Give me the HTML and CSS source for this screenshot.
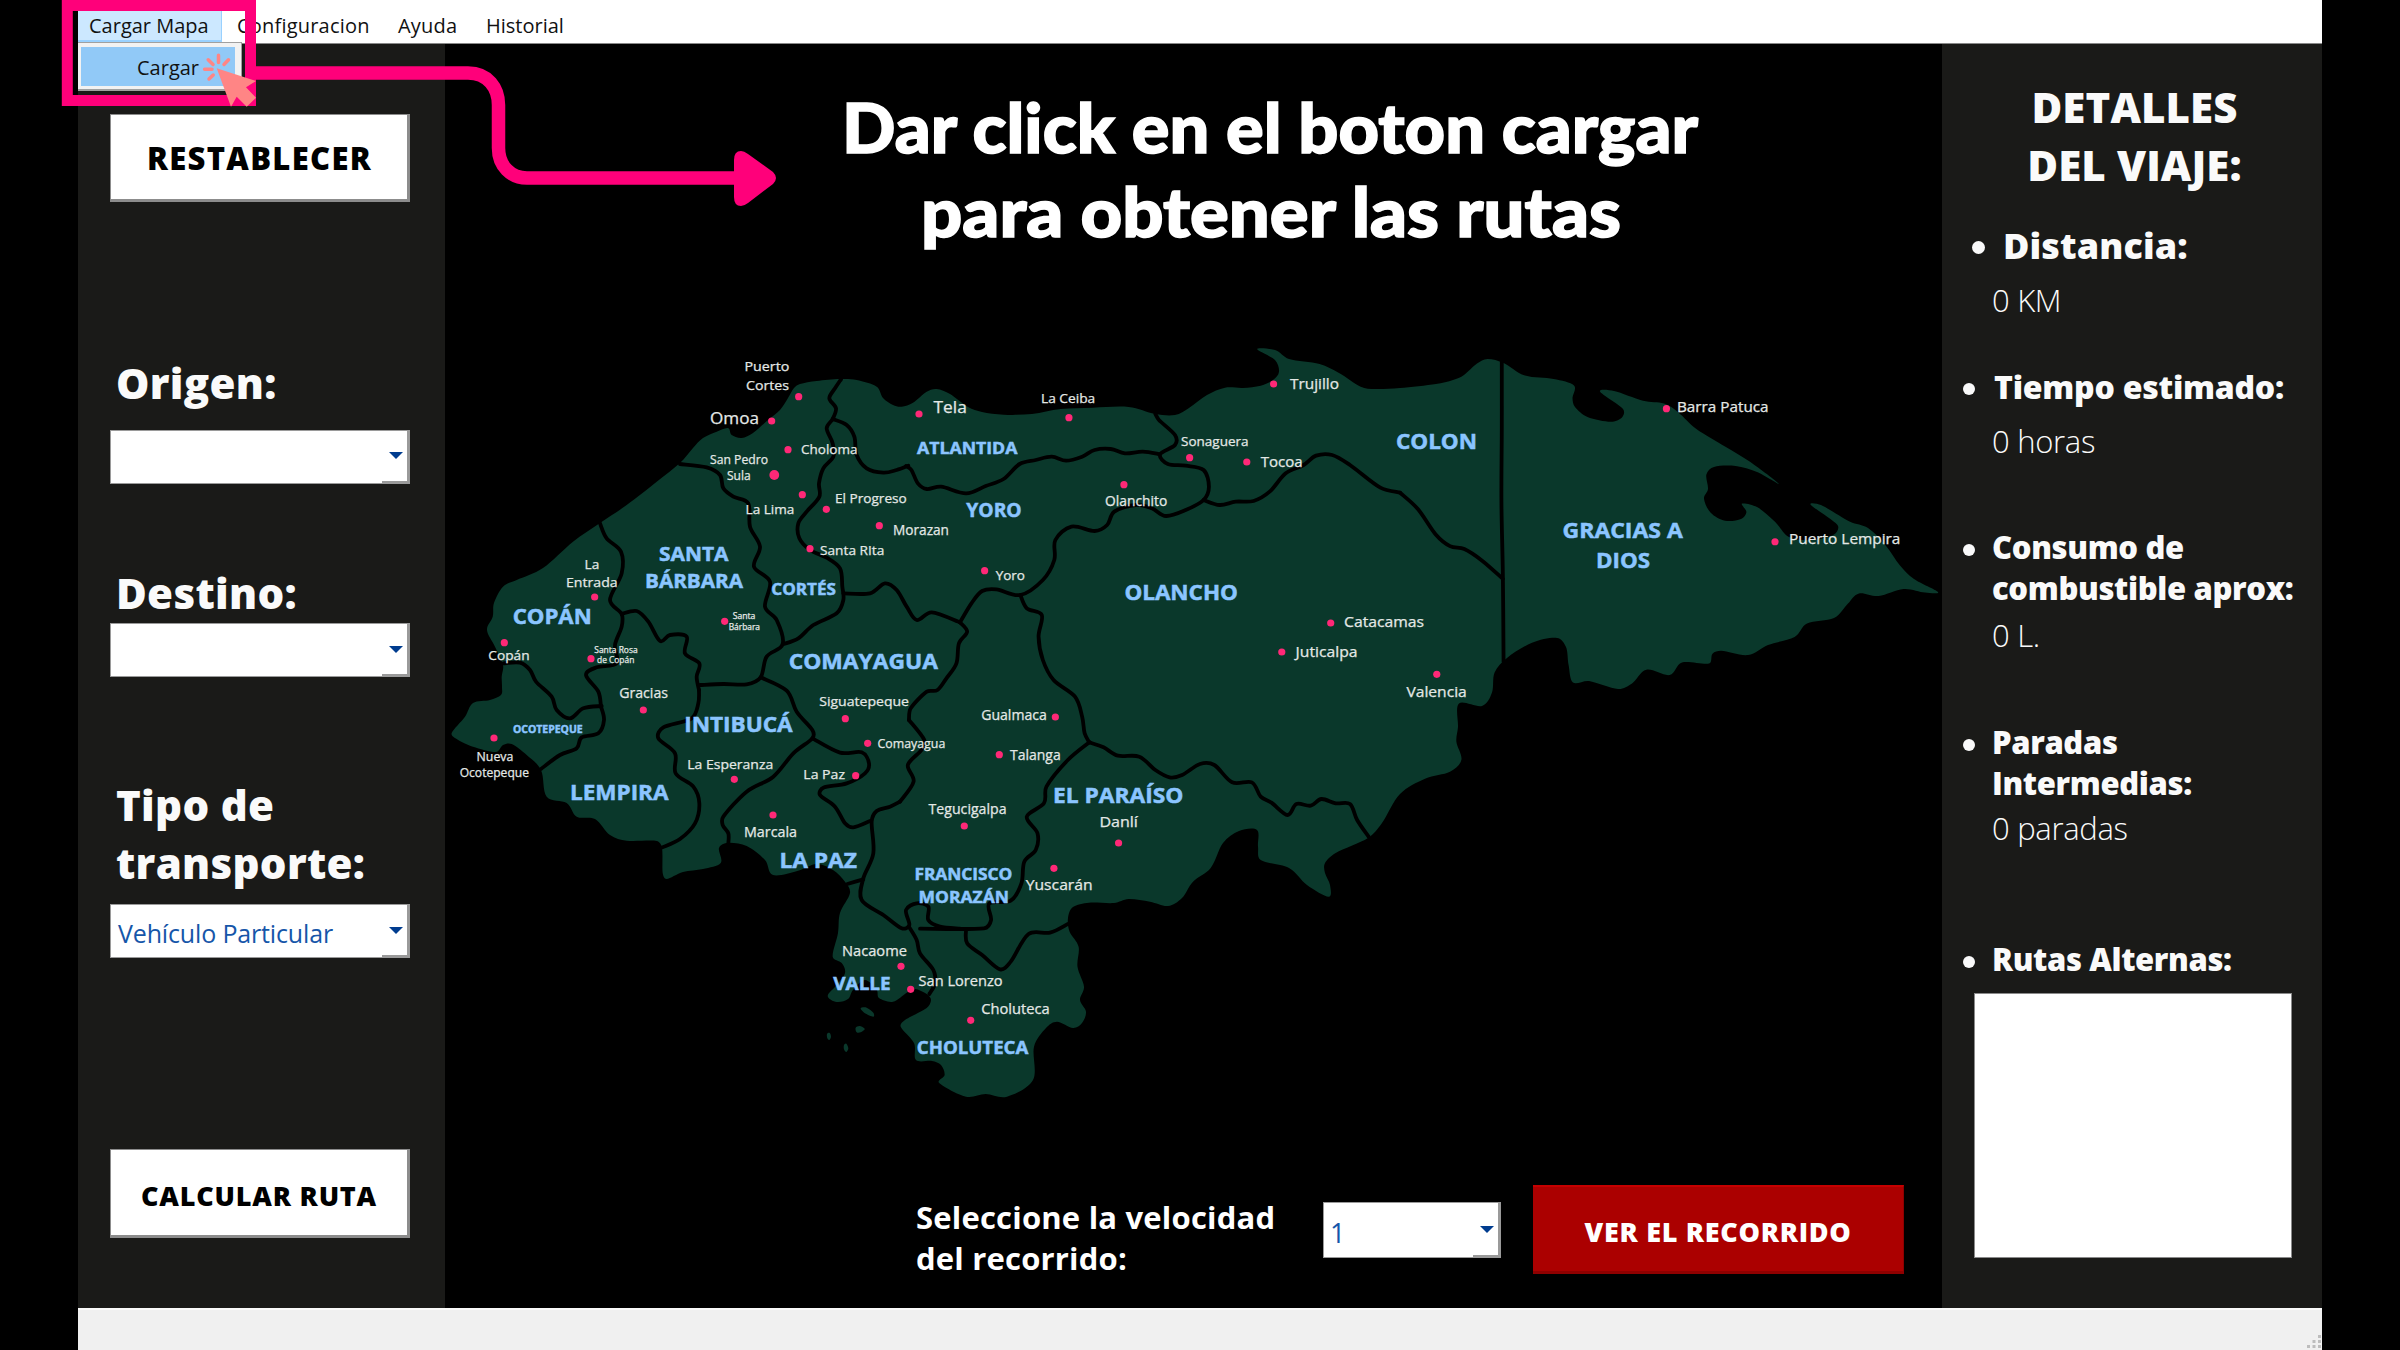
FILE: index.html
```html
<!DOCTYPE html>
<html lang="es">
<head>
<meta charset="utf-8">
<title>Rutas de Honduras</title>
<link rel="stylesheet" href="styles.css">
</head>
<body>
<div class="window">
  <nav class="menubar">
    <div class="menu menu-open"><span class="t-mapa">Cargar Mapa</span>
      <div class="dropdown"><div class="dropdown-item">Cargar</div></div>
    </div>
    <div class="menu menu-config"><span>Configuracion</span></div>
    <div class="menu menu-help"><span>Ayuda</span></div>
    <div class="menu"><span>Historial</span></div>
  </nav>

  <div class="workspace">
    <aside class="panel panel-left">
      <button class="btn btn-reset"><span>RESTABLECER</span></button>
      <h2 class="field-title origin">Origen:</h2>
      <div class="combo combo-origin"><span></span><i class="caret"></i></div>
      <h2 class="field-title destination">Destino:</h2>
      <div class="combo combo-destination"><span></span><i class="caret"></i></div>
      <h2 class="field-title transport">Tipo de<br>transporte:</h2>
      <div class="combo combo-transport"><span>Vehículo Particular</span><i class="caret"></i></div>
      <button class="btn btn-route"><span>CALCULAR RUTA</span></button>
    </aside>

    <main class="stage">
      <svg class="map" viewBox="444 43 1498 1142">
        <g id="land" class="land"></g>
        <g id="borders" class="borders"></g>
        <g class="regions">
          <text x="512.700" y="624.3" textLength="79" font-size="21">COPÁN</text>
          <text x="659" y="560.7" textLength="69.5" font-size="20">SANTA</text>
          <text x="645" y="588.3" textLength="98" font-size="20">BÁRBARA</text>
          <text x="771.3" y="595" textLength="64.7" font-size="16.5">CORTÉS</text>
          <text x="788.7" y="669" textLength="149.3" font-size="21">COMAYAGUA</text>
          <text x="684.2" y="731.7" textLength="108.5" font-size="21">INTIBUCÁ</text>
          <text x="513" y="733" textLength="69.7" font-size="11">OCOTEPEQUE</text>
          <text x="570" y="799.7" textLength="98.5" font-size="21">LEMPIRA</text>
          <text x="779.4" y="868" textLength="77.5" font-size="21">LA PAZ</text>
          <text x="833.3" y="989.7" textLength="57.3" font-size="17.5">VALLE</text>
          <text x="917" y="454.3" textLength="100.4" font-size="16.5">ATLANTIDA</text>
          <text x="966.3" y="517.3" textLength="55.4" font-size="19">YORO</text>
          <text x="1124.4" y="599.7" textLength="113.5" font-size="20.5">OLANCHO</text>
          <text x="1053" y="803" textLength="130.3" font-size="21">EL PARAÍSO</text>
          <text x="914.4" y="879.7" textLength="98" font-size="16.5">FRANCISCO</text>
          <text x="918.6" y="903" textLength="90.3" font-size="16.5">MORAZÁN</text>
          <text x="916.8" y="1053.7" textLength="111.5" font-size="18.5">CHOLUTECA</text>
          <text x="1396" y="449" textLength="81" font-size="20.5">COLON</text>
          <text x="1562.6" y="537.7" textLength="120.2" font-size="20.5">GRACIAS A</text>
          <text x="1596" y="568" textLength="54" font-size="20.5">DIOS</text>
        </g>
        <g class="cities">
          <text x="744.5" y="371" textLength="44.8" font-size="13.5">Puerto</text>
          <text x="746" y="389.7" textLength="43" font-size="13.5">Cortes</text>
          <text x="710" y="424" textLength="49" font-size="17">Omoa</text>
          <text x="801" y="454.3" textLength="56.4" font-size="13.5">Choloma</text>
          <text x="710" y="464" textLength="58" font-size="13">San Pedro</text>
          <text x="727" y="480" textLength="23.7" font-size="13">Sula</text>
          <text x="745.6" y="514.3" textLength="48.7" font-size="13.5">La Lima</text>
          <text x="835" y="503" textLength="71.7" font-size="13.5">El Progreso</text>
          <text x="893" y="535" textLength="56" font-size="14">Morazan</text>
          <text x="820" y="554.7" textLength="64.3" font-size="13.5">Santa RIta</text>
          <text x="584.6" y="568.7" textLength="14.7" font-size="13.5">La</text>
          <text x="566" y="587" textLength="51.7" font-size="13.5">Entrada</text>
          <text x="732.7" y="618.7" textLength="22.7" font-size="8.5">Santa</text>
          <text x="728.7" y="629.7" textLength="31.3" font-size="8.5">Bárbara</text>
          <text x="488.3" y="660.3" textLength="41.3" font-size="13.5">Copán</text>
          <text x="594.3" y="652.7" textLength="43.3" font-size="8.5">Santa Rosa</text>
          <text x="597" y="663.3" textLength="37.3" font-size="8.5">de Copán</text>
          <text x="619.2" y="697.7" textLength="48.8" font-size="14">Gracias</text>
          <text x="819.2" y="705.7" textLength="89.8" font-size="13.5">Siguatepeque</text>
          <text x="476.6" y="760.7" textLength="36.7" font-size="12.5">Nueva</text>
          <text x="459.7" y="776.7" textLength="69.3" font-size="12.5">Ocotepeque</text>
          <text x="687.3" y="769.3" textLength="86" font-size="13.5">La Esperanza</text>
          <text x="803.3" y="779.3" textLength="41.7" font-size="13.5">La Paz</text>
          <text x="877.5" y="748" textLength="67.8" font-size="13">Comayagua</text>
          <text x="744" y="836.7" textLength="53" font-size="14">Marcala</text>
          <text x="842" y="955.7" textLength="65" font-size="14">Nacaome</text>
          <text x="918.5" y="986.3" textLength="84.1" font-size="14">San Lorenzo</text>
          <text x="933.6" y="413.3" textLength="33.2" font-size="16.5">Tela</text>
          <text x="1041" y="402.7" textLength="54.2" font-size="13.5">La Ceiba</text>
          <text x="1290" y="389.3" textLength="49" font-size="14">Trujillo</text>
          <text x="1181" y="446.3" textLength="67.5" font-size="13.5">Sonaguera</text>
          <text x="1260.7" y="466.7" textLength="42" font-size="15">Tocoa</text>
          <text x="1105" y="506.3" textLength="62.2" font-size="14">Olanchito</text>
          <text x="995.7" y="579.7" textLength="29.3" font-size="13.5">Yoro</text>
          <text x="1344" y="626.7" textLength="80" font-size="14.5">Catacamas</text>
          <text x="1295.6" y="656.7" textLength="61.9" font-size="14.5">Juticalpa</text>
          <text x="1406.4" y="697" textLength="60.4" font-size="14.5">Valencia</text>
          <text x="981.2" y="719.7" textLength="65.6" font-size="14">Gualmaca</text>
          <text x="1010" y="759.7" textLength="50.7" font-size="14">Talanga</text>
          <text x="928.6" y="814.3" textLength="77.9" font-size="14">Tegucigalpa</text>
          <text x="1099.4" y="827.3" textLength="38.5" font-size="14.5">Danlí</text>
          <text x="1025.7" y="890" textLength="67" font-size="14.5">Yuscarán</text>
          <text x="981.2" y="1013.7" textLength="68.5" font-size="14">Choluteca</text>
          <text x="1677" y="411.6" textLength="91.6" font-size="14">Barra Patuca</text>
          <text x="1789" y="544.3" textLength="111.4" font-size="14">Puerto Lempira</text>
        </g>
        <g id="pins" class="pins"></g>
        <g class="headline">
          <text x="842" y="152.5" textLength="856" font-size="68">Dar click en el boton cargar</text>
          <text x="921" y="236.5" textLength="700" font-size="68">para obtener las rutas</text>
        </g>
      </svg>
      <div class="controls">
        <p class="speed-label">Seleccione la velocidad<br>del recorrido:</p>
        <div class="combo combo-speed"><span>1</span><i class="caret"></i></div>
        <button class="btn-play"><span>VER EL RECORRIDO</span></button>
      </div>
    </main>

    <aside class="panel panel-right">
      <h1 class="details-title">DETALLES<br><span>DEL VIAJE:</span></h1>
      <h3 class="item distance"><span>Distancia:</span></h3>
      <p class="value v-distance">0 KM</p>
      <h3 class="item time"><span>Tiempo estimado:</span></h3>
      <p class="value v-time">0 horas</p>
      <h3 class="item fuel"><span>Consumo de<br>combustible aprox:</span></h3>
      <p class="value v-fuel">0 L.</p>
      <h3 class="item stops"><span>Paradas<br>Intermedias:</span></h3>
      <p class="value v-stops">0 paradas</p>
      <h3 class="item routes"><span>Rutas Alternas:</span></h3>
      <div class="routes-list"></div>
    </aside>
  </div>

  <footer class="statusbar">
    <svg class="grip" viewBox="0 0 15 15"><path d="M11 0h3v3h-3zM5.500 5h3v3h-3zM11 5h3v3h-3zM0 10h3v3h-3zM5.500 10h3v3h-3zM11 10h3v3h-3z"/></svg>
  </footer>
</div>

<svg class="annotation" viewBox="0 0 800 220">
  <rect class="frame" x="67.300" y="5.500" width="183.200" height="95"/>
  <path class="arrow-line" d="M250 73H468C488 73 498.500 88 498.500 105V148C498.500 166 511 178 527 178H740"/>
  <path class="arrow-head" d="M734 160Q734 151 741 151Q744 151 748 154L773 172Q779 178 773 184L748 203Q744 206 741 206Q734 206 734 197Z"/>
  <path class="pointer" d="M216.700 68.300L256 81L246 87.300L256 97.700L246.700 106.700L236.700 96.700L231 106.700Z"/>
  <path class="rays" d="M218.500 55.300V62.500M228.500 59.800L224 64.500M208.200 59.800L213 64.500M204.600 69.300H212M209 79L213.200 75"/>
</svg>
<script src="map.js"></script>
</body>
</html>
```
FILE: styles.css
```css
* { box-sizing: border-box; }
html, body { margin: 0; height: 100%; background: #000; overflow: hidden; }
body { font-family: "Open Sans", "Noto Sans", sans-serif; position: relative; }
h1, h2, h3, p { margin: 0; }
button { border: 0; padding: 0; font-family: inherit; white-space: nowrap; }

.window { width: 2244px; height: 1350px; margin-left: 78px; display: flex; flex-direction: column; }

.menubar { height: 44px; background: #fff; display: flex; border-bottom: 1px solid #888; font-size: 20px; line-height: 27px; color: #111; flex: none; }
.menu { position: relative; padding: 12px 14px 0 15px; white-space: nowrap; }
.menu-open { width: 144px; height: 42px; padding-left: 11px; background: #cce8ff; border: solid #99d1ff; border-width: 0 1px 2px 0; }
.menu-config { width: 161px; letter-spacing: 0.2px; }
.menu-help { width: 88px; letter-spacing: 0.2px; }
.dropdown { position: absolute; left: 0; top: 42px; width: 164px; height: 49px; background: #f2f2f2; border: solid #a0a0a0; border-width: 1px 1px 2px 0; padding: 4px 6px 4px 3px; z-index: 2; }
.dropdown-item { height: 39px; width: 154px; background: #91c9f7; padding: 7px 0 0 56px; }

.workspace { flex: none; height: 1264px; display: flex; }
.panel { background: #1a1a18; color: #fafafa; display: flex; flex-direction: column; }
.panel-left { width: 367px; padding: 70px 35px 0 32px; }
.panel-right { width: 380px; padding: 34px 0 0 50px; }

.btn { background: #fff; color: #000; font-weight: 800; border: solid #8c8c8c; border-width: 1px 3px 3px 1px; flex: none; }
.btn-reset { height: 88px; font-size: 31px; letter-spacing: 1.3px; padding: 2px 0 0 1px; }
.btn-route { height: 89px; margin-top: 191px; font-size: 27px; letter-spacing: 0.8px; padding-top: 5px; }
.field-title { font-size: 42px; line-height: 57.500px; font-weight: 800; padding-left: 6px; letter-spacing: 0.3px; white-space: nowrap; }
.origin { margin-top: 152px; }
.destination { margin-top: 80px; }
.transport { margin-top: 99px; }
.combo { position: relative; height: 54px; background: #fff; border: solid #9a9a9a; border-width: 1px 3px 1px 1px; display: flex; align-items: center; justify-content: space-between; padding: 4px 4px 0 7px; font-size: 25px; letter-spacing: -0.150px; color: #1656a9; flex: none; white-space: nowrap; }
.combo::after { content: ""; position: absolute; right: 0; bottom: 0; width: 25px; height: 2px; background: #9a9a9a; }
.combo-origin { margin-top: 18px; }
.combo-destination { margin-top: 2px; }
.combo-transport { margin-top: 13px; }
.caret { border: 7px solid transparent; border-top: 7px solid #003c8f; border-bottom: 0; margin-top: -6px; }

.stage { width: 1497px; background: #000; }
.map { display: block; width: 1498px; height: 1142px; margin: -1px 0 0 -1px; overflow: hidden; }
.land { fill: #0a382b; }
.borders { fill: none; stroke: #000; stroke-width: 3.800px; stroke-linejoin: round; stroke-linecap: round; }
.regions { fill: #8bc5ff; font-weight: 700; stroke: #8bc5ff; stroke-width: 0.500px; }
.cities { fill: #e4e8e6; font-weight: 500; stroke: #e4e8e6; stroke-width: 0.250px; }
.pins { fill: #ff2877; }
.headline { fill: #fff; font-family: "Lato", "Open Sans", sans-serif; font-weight: 900; stroke: #fff; stroke-width: 1.500px; }

.controls { display: flex; padding-left: 471px; color: #fff; }
.speed-label { width: 407px; font-size: 31px; line-height: 41.300px; font-weight: 700; letter-spacing: 0.200px; margin-top: 12px; white-space: nowrap; }
.combo-speed { width: 178px; height: 56px; margin-top: 17px; font-size: 27px; padding-left: 6px; }
.btn-play { width: 371px; height: 89px; margin-left: 32px; background: #ab0000; color: #fff; font-weight: 800; font-size: 27px; letter-spacing: 0.700px; border: solid #8e0000; border-width: 2px 1px 3px 0; border-top-color: #c40000; padding-top: 4px; }

.details-title { font-size: 42px; line-height: 58px; font-weight: 800; text-align: center; width: 285px; letter-spacing: 0.100px; }
.item { position: relative; font-size: 31px; line-height: 41.500px; font-weight: 800; letter-spacing: -0.350px; display: flex; white-space: nowrap; margin-left: -29px; padding-left: 29px; }
.item::before { content: ""; position: absolute; left: 0; top: 17px; width: 12px; height: 12px; border-radius: 50%; background: #fafafa; }
.value { font-size: 31px; line-height: 42px; font-weight: 300; letter-spacing: -0.300px; }
.distance { font-size: 36px; line-height: 48px; letter-spacing: 0.100px; margin-top: 28px; margin-left: -20px; padding-left: 31px; }
.distance::before { top: 19px; width: 13px; height: 13px; }
.v-distance { margin-top: 9px; }
.time { font-size: 32px; letter-spacing: -0.250px; margin-top: 45px; padding-left: 31px; }
.v-time { margin-top: 12px; }
.fuel { margin-top: 65px; }
.v-fuel { margin-top: 4px; }
.stops { margin-top: 66px; }
.v-stops { margin-top: 2px; }
.routes { margin-top: 90px; }
.routes-list { width: 318px; height: 265px; margin: 13px 0 0 -18px; background: #fff; border: 1px solid #8a8a8a; }

.statusbar { flex: 1; background: #f0f0f0; border-top: 2px solid #fafafa; display: flex; justify-content: flex-end; align-items: flex-end; }
.grip { width: 15px; height: 15px; fill: #bdbdbd; }

.annotation { position: absolute; left: 0; top: 0; width: 800px; height: 220px; z-index: 5; }
.frame { fill: none; stroke: #ff007a; stroke-width: 11px; }
.arrow-line { fill: none; stroke: #ff007a; stroke-width: 13.500px; }
.arrow-head { fill: #ff007a; }
.pointer { fill: #ff8585; }
.rays { fill: none; stroke: #ff8585; stroke-width: 3.500px; stroke-linecap: round; }
```
FILE: map.js
```js
// Survey sheets: each one has its own origin and units per pixel.
const SHEETS = {
  A: [440, 320, 3, 3],
  B: [900, 320, 2.8, 3],
  C: [440, 640, 3, 3],
  D: [900, 660, 2.8, 3],
  E: [1400, 320, 2.8, 2.751]
};

const COAST = `451.7,733 465,716.7 473,703 490,700 501,695 502,687 501.7,676.7 503,665 495,646.7 487,630 492.7,616.7 494,603 503,586.7 516.7,580 543,568 573,541.7 600,523 626.7,505 656.7,481.7 680,463 693,448 703,438 716.7,431.7 728,428 731.7,435 741.7,438 753,433 768,420 780,410 788,398 794,388 800,384 816.7,381 840,379 856.7,380 876.7,386.7 883,398 893,405 901.7,406.7 913,402.7 926.7,391.7 936.7,389 950,394 968,407 982,412 1003.6,414.7 1032,414 1060.7,409 1093,407.7 1128.6,407 1155,414 1175,415 1189,408 1207,395 1225,387.7 1243,388 1260.7,385.7 1273,380 1279,371.7 1275,360 1257,349 1275,350 1289,359 1319.6,364 1339,373 1360.7,386.7 1375,389 1400,388 1436,384 1453,380 1464,375 1477,363.6 1487.500,359 1503.6,363 1525,375.6 1553.6,379 1574,385.4 1572.5,398 1575,407 1587.5,417 1610.7,421.8 1622,417.4 1623,409 1600,391.6 1614,391 1643,400.7 1664,403.6 1678.6,412.7 1696.4,429 1725,446.5 1750,461.8 1778.6,483.6 1757,472 1735.7,466 1714,466.9 1706.4,474.5 1708,489 1704,498.8 1710.7,512.7 1725,520.7 1741,519 1746.4,512 1742,503.6 1757,507 1775,521.7 1789,537 1812,540 1834,534.5 1837.5,525 1810.7,504.7 1821,505 1850,521.7 1868,528 1885.7,545.4 1900,565.4 1914,579 1938,592 1925,592.6 1903.6,589 1878.6,596 1859,593.4 1848,603.5 1834,618 1807,623.5 1794.6,637 1768,645 1748,655 1721.4,650.8 1712.5,653.7 1709,663.5 1682,662.4 1669.6,675 1646.4,669.7 1632,683.5 1618,689 1589,681 1573,682.4 1568.6,665 1566,647 1557,638 1532,642.8 1507,658 1494.6,672.6 1492,692.6 1482,706 1459,703.5 1458,727 1456.4,741.7 1461.4,759.8 1450,771.8 1425,778.7 1400,794 1382,823 1368,838 1335.7,853 1325,863 1325,873 1330,885 1328.6,896.7 1307,885 1289,868 1260.7,860 1258,846.7 1257,830 1239,831 1223,843 1210.7,868 1193,881.7 1182,898 1168,906 1150,901.7 1128.6,899 1114,903 1089,902.7 1073,907 1068,918 1069.6,931.7 1078.6,946.7 1077.5,966.7 1084,986.7 1080,1000 1086,1011.7 1082,1023 1073,1028 1057,1021.7 1046,1028 1034,1046.7 1033,1080 1007,1096.7 985.7,1094 966,1096.7 939,1082.7 944.6,1075 941,1065 932,1061 916,1060 914,1043 900.7,1026.7 905,1020 926.7,1008 931,1000 926.7,994 915,989 906.7,992.7 893,1001.7 879,998 876.7,990 865,980 853,990 848,999 836.7,1002 827.7,996 836.7,985 845,973 841.7,963 832.7,956.7 838,933 840,913 850,893 845,881.7 833,870 816.7,864 798,870.7 773,875 765,860 746.7,846 728,842.7 719,848 720.7,863 703,869 683,872 666.7,879 662.7,873 662,848 656.7,841 626.7,840.7 610,835 595,819 576.7,816.7 566.7,803 546.7,796.7 541,770 526.7,755 511.7,744 503,745 496,752 473,746.7 456.7,739`;

const ISLETS = [
  'C 1262,1105 1280,1103 1300,1118 1300,1130 1275,1120',
  'C 1247,1163 1260,1158 1274,1167 1262,1177 1250,1177',
  'C 1161,1182 1169,1179 1173,1190 1168,1200 1162,1195',
  'C 1212,1215 1219,1211 1225,1225 1219,1236 1212,1228'
];

const BORDERS = [
  'A 1203,178 1185,205 1168,235 1188,265 1178,297 1160,325 1178,370 1180,410 1150,445 1137,490 1138,530 1100,575 1075,610 1078,655 1110,690 1160,713 1200,745 1207,800 1210,840 1190,880 1120,915 1075,955 1028,973',
  'A 1178,297 1220,315 1243,350 1250,405 1280,445 1330,458 1370,450 1405,437',
  'B 17,438 32,450 50,490 75,507 115,500 185,520 240,498 290,477 335,432 380,420 425,410 465,422 510,410 545,390 590,387 630,400 680,395 728,403',
  'A 720,432 800,442 840,465 850,505 880,530 925,550 930,620 960,680 942,740 990,785 975,860 1010,900 1028,973 980,1010 962,1072 920,1093 850,1092 780,1095',
  'A 480,610 500,655 543,695 545,760 510,840 545,882 545,920 525,975 530,1030 470,1042 438,1065 475,1115 483,1160',
  'C 483,200 492,240 475,280 425,292 410,325 360,345 303,387',
  'A 545,882 590,873 625,905 660,963 690,945 740,950 735,1000 778,1030 770,1070 777,1110',
  'C 777,150 775,190 755,235 670,262 655,295 705,340 707,400 760,440 778,490 765,550 720,597 667,622',
  'A 190,1030 240,1028 270,1050 288,1085 335,1130 350,1170 390,1195 430,1165 485,1158',
  'C 962,112 1040,152 1070,215 1117,270 1117,295 1060,340 1000,410 920,455 850,530 848,555 865,580 865,610',
  'C 1117,295 1200,338 1265,337 1287,370 1275,400 1220,430 1150,443 1140,465 1185,500 1215,550 1240,562 1290,543',
  'B 168,907 188,935 165,970 158,1030 130,1075 105,1110 75,1115 30,1165 25,1200',
  'D 25,180 68,240 60,270 22,315 38,365 0,425',
  'C 1380,485 1350,500 1310,513 1295,545 1300,640 1270,715 1265,780 1330,825 1385,865 1408,855 1398,810 1430,790 1465,800 1465,840 1500,860 1560,866',
  'D 56,806 235,805 255,780 250,730 310,722 340,670 348,605 380,570 385,520 355,470 403,430 410,380 470,300 530,247',
  'C 1270,718 1222,732',
  'C 1408,862 1430,900 1440,940 1480,990 1485,1030 1468,1062',
  'A 1210,820 1290,820 1335,790 1370,810 1400,860 1430,900 1475,877 1560,907',
  'B 168,907 200,850 230,813 270,808 337,825 400,780 432,720 435,660 480,620 545,633 580,615 600,575 660,555 705,565 745,588 800,570 850,540 865,500 850,450 800,437 750,432 728,403 770,375 770,345 725,300 715,282',
  'B 850,540 895,555 940,545 990,543 1035,515 1080,460 1130,435 1165,407 1210,405 1260,435 1345,503 1400,518',
  'E 0,475 50,520 100,590 140,622 180,630 230,662 288,712',
  'E 285,115 285,300 284,500 288,700 290,940',
  'B 337,825 355,865 397,885 388,950 400,1020 430,1080 490,1130 510,1190 517,1240 530,1267',
  'D 530,247 570,262 610,287 670,290 715,330 755,352 790,345 840,312 880,315 930,367 985,367 1010,410 1040,428 1085,465 1110,432 1150,437 1180,417 1220,430 1260,432 1280,480 1312,530',
  'D 185,807 188,850 230,885 280,928 310,905 360,822 420,818 470,792'
];

const PINS = [
  'A 1076,230 995,303 1044,389 1087,524 1159,568 1318,617 1110,686 464,831 193,968 854,904 453,1016 610,1170 1216,1196 1437,282',
  'C 162,294 883,418 999,525 1247,407 1283,310 1383,979 1412,1048',
  'B 473,293 1046,192 811,413 971,426 627,494 237,752 1206,909 1069,996 1503,1063 435,1191',
  'D 278,284 180,498 612,549 431,625 198,1081',
  'E 746,244 1050,610'
];

const SVG = 'http://www.w3.org/2000/svg';

function add(parent, tag, attrs) {
  const el = document.createElementNS(SVG, tag);
  for (const k in attrs) el.setAttribute(k, attrs[k]);
  document.getElementById(parent).appendChild(el);
}

function parse(line) {
  return line.split(' ').map(p => p.split(',').map(Number));
}

function onSheet(line) {
  const [ox, oy, sx, sy] = SHEETS[line[0]];
  return parse(line.slice(2)).map(([x, y]) => [ox + x / sx, oy + y / sy]);
}

// Smooth curve through every point.
function curve(pts, closed) {
  const n = pts.length;
  const at = i => closed ? pts[(i + n) % n] : pts[Math.max(0, Math.min(n - 1, i))];
  let d = `M${pts[0]}`;
  for (let i = 0; i < (closed ? n : n - 1); i++) {
    const [a, b, c, e] = [at(i - 1), at(i), at(i + 1), at(i + 2)];
    const len = Math.hypot(c[0] - b[0], c[1] - b[1]);
    const handle = (p, q) => {
      const l = Math.hypot(q[0] - p[0], q[1] - p[1]) || 1;
      const k = Math.min(1 / 6, len * 0.36 / l);
      return [(q[0] - p[0]) * k, (q[1] - p[1]) * k];
    };
    const h1 = handle(a, c);
    const h2 = handle(b, e);
    d += `C${b[0] + h1[0]},${b[1] + h1[1]} ${c[0] - h2[0]},${c[1] - h2[1]} ${c}`;
  }
  return d + (closed ? 'Z' : '');
}

add('land', 'path', { d: curve(parse(COAST), true) });
ISLETS.forEach(l => add('land', 'path', { d: curve(onSheet(l), true) }));
BORDERS.forEach(l => add('borders', 'path', { d: curve(onSheet(l), false) }));
PINS.forEach(l => onSheet(l).forEach(([x, y]) => add('pins', 'circle', { cx: x, cy: y, r: 3.6 })));
add('pins', 'circle', { cx: 774.3, cy: 475, r: 4.9 });
document.querySelectorAll('.map text').forEach(t => t.setAttribute('lengthAdjust', 'spacingAndGlyphs'));
```
